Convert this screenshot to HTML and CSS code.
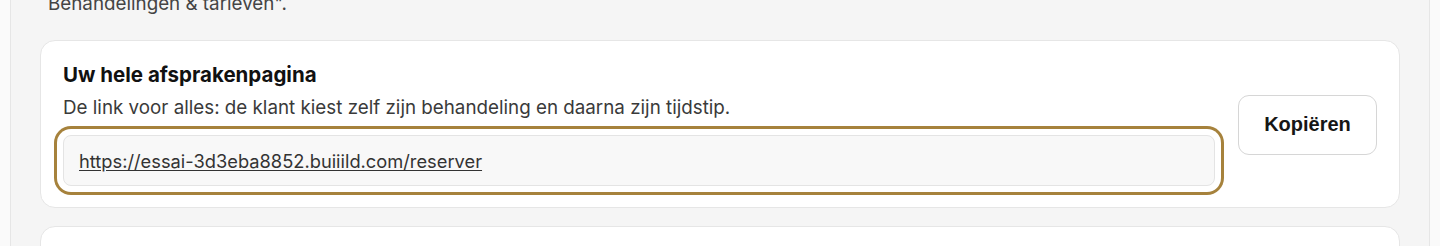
FILE: index.html
```html
<!DOCTYPE html>
<html lang="nl">
<head>
<meta charset="utf-8">
<title>Afsprakenpagina</title>
<link rel="stylesheet" href="styles.css">
</head>
<body>
<div class="page">
  <main class="panel">
    <p class="intro">Behandelingen &amp; tarieven".</p>
    <section class="card">
      <div class="card-main">
        <h2 class="card-title">Uw hele afsprakenpagina</h2>
        <p class="card-desc">De link voor alles: de klant kiest zelf zijn behandeling en daarna zijn tijdstip.</p>
        <div class="link-field">
          <a class="link" href="#">https://essai-3d3eba8852.buiiild.com/reserver</a>
        </div>
      </div>
      <button class="copy-btn" type="button">Kopiëren</button>
    </section>
    <section class="card card-next"></section>
  </main>
</div>
</body>
</html>
```

FILE: styles.css
```css
* { box-sizing: border-box; }
html, body { margin: 0; padding: 0; }
body {
  background: #fafafa;
  font-family: Inter, "Noto Sans", sans-serif;
  color: #1a1a1a;
  height: 246px;
  overflow: hidden;
}
.page {
  padding: 0 10px;
}
.panel {
  background: #f5f5f5;
  border-left: 1px solid #e6e6e6;
  border-right: 1px solid #e6e6e6;
  padding: 0 29px;
  min-height: 300px;
  display: flow-root;
}
.intro {
  margin: -9px 0 0 0;
  padding-left: 8px;
  font-size: 18.8px;
  line-height: 26px;
  color: #444;
}
.card {
  margin-top: 23px;
  background: #fff;
  border: 1px solid #e6e6e6;
  border-radius: 15px;
  padding: 22px 22px 21px 22px;
  display: flex;
  align-items: center;
  gap: 23px;
}
.card-main {
  flex: 1;
  min-width: 0;
}
.card-title {
  margin: 0;
  font-size: 20.5px;
  line-height: 24px;
  font-weight: 700;
  color: #111;
}
.card-desc {
  margin: 8px 0 0 0;
  font-size: 18.8px;
  line-height: 26px;
  color: #3a3a3a;
}
.link-field {
  margin-top: 14px;
  height: 51px;
  display: flex;
  align-items: center;
  padding: 0 15px;
  background: #f8f8f8;
  border: 1px solid #e4e4e4;
  border-radius: 8px;
  box-shadow: 0 0 0 6px #fff, 0 0 0 9px #a6823c;
}
.link {
  font-size: 18.3px;
  color: #333;
  text-decoration: underline;
  text-underline-offset: 2px;
}
.copy-btn {
  flex: none;
  width: 139px;
  height: 60px;
  background: #fff;
  border: 1px solid #d6d6d6;
  border-radius: 11px;
  font-family: "Liberation Sans", Arial, sans-serif;
  font-weight: 700;
  font-size: 20px;
  color: #161616;
  cursor: pointer;
}
.card-next {
  margin-top: 18px;
  height: 60px;
}
```
